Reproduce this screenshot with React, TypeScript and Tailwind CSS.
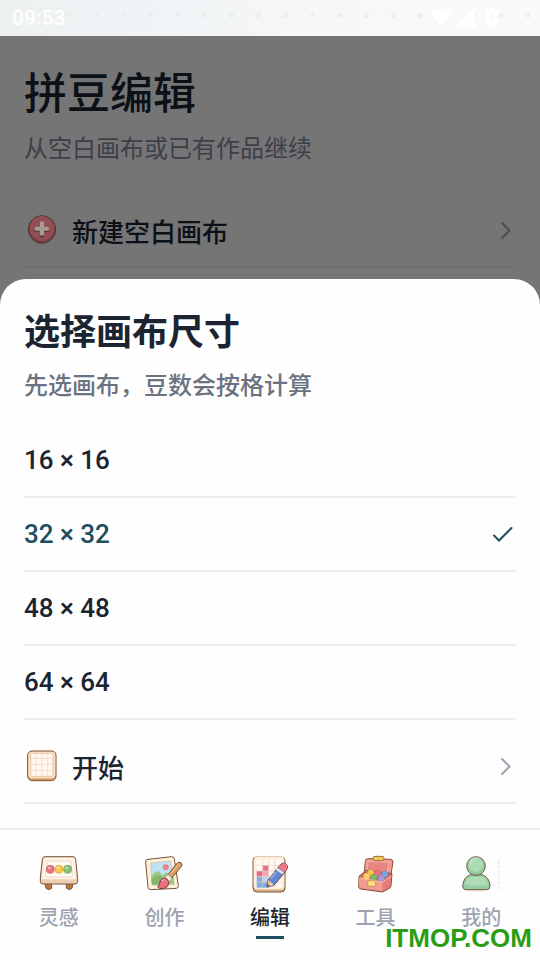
import React, { useState } from 'react';

const sizes = [16, 32, 48, 64];

const StatusIcons = () => (
  <svg className="w-[70px] h-5" viewBox="0 0 70 20" fill="#ffffff" aria-hidden="true">
    <path d="M0 4Q11-3 23 4L11.500 19Z" />
    <path d="M45 0V19H26Z" />
    <path fillRule="evenodd" d="M59 0h5v2h4v17H56V2h3zM63 5l-4 6h3v5l4-7h-3z" />
  </svg>
);

const Chevron = ({ className }: { className: string }) => (
  <svg className={className} viewBox="0 0 20 20" fill="none" stroke="currentColor" strokeWidth="2" strokeLinecap="round" aria-hidden="true">
    <path d="M6 3L13.500 10.500L6 18" />
  </svg>
);

const PlusIcon = () => (
  <svg className="w-9 h-9" viewBox="0 0 108 108" aria-hidden="true">
    <ellipse cx="54" cy="60" rx="36" ry="38" fill="#6e675e" />
    <circle cx="54" cy="52" r="41" fill="#7c3d42" stroke="#49342a" strokeWidth="3" />
    <circle cx="54" cy="49" r="37" fill="#914e53" />
    <path d="M46 33q8-5 14 0v14h14q5 7 0 13H60v14q-7 6-14 0V60H33q-6-6 0-13h13z" fill="#5f342f" />
    <path d="M47 30q7-4 13 0v14h13q5 6 0 12H60v13q-7 5-13 0V56H34q-5-6 0-12h13z" fill="#a69d92" />
  </svg>
);

const CanvasIcon = () => (
  <svg className="w-9 h-9" viewBox="0 0 108 108" aria-hidden="true">
    <rect x="12" y="14" width="84" height="88" rx="14" fill="#f2dfcd" />
    <rect x="11" y="9" width="85" height="88" rx="13" fill="#dba878" stroke="#765138" strokeWidth="3" />
    <rect x="13" y="11" width="81" height="80" rx="12" fill="#ffe3c1" />
    <rect x="20" y="16" width="67" height="69" rx="6" fill="#fff9f2" stroke="#d9ae88" strokeWidth="2" />
    <path d="M36 17v67M54 17v67M71 17v67M21 31h65M21 49h65M21 67h65" stroke="#f8ddc8" strokeWidth="3" />
  </svg>
);

const BenchIcon = () => (
  <>
    <path d="M17 84h21v19q-8 8-17 0zM80 84h23l-4 19q-9 8-16 0z" fill="#b7773d" stroke="#85583a" strokeWidth="3" />
    <path d="M18 8h84q7 0 8 8l6 57v10q0 7-8 7H12q-8 0-8-7V72l6-56q1-8 8-8z" fill="#edceb0" stroke="#775743" strokeWidth="3" />
    <path d="M20 11h81q6 0 7 7l4 50q0 8-7 8H14q-7 0-6-8l5-50q1-7 7-7z" fill="#fff4e7" />
    <path d="M25 21h70l5 44q0 4-4 4H23q-4 0-4-4z" fill="#fffaf2" stroke="#edd8c5" strokeWidth="3" />
    <circle cx="34" cy="46" r="12" fill="#ee7285" stroke="#c65567" strokeWidth="2" />
    <circle cx="60" cy="46" r="12" fill="#f8cc48" stroke="#d79b28" strokeWidth="2" />
    <circle cx="86" cy="46" r="12" fill="#8bc174" stroke="#659c59" strokeWidth="2" />
    <g fill="#ffffff" opacity=".5">
      <circle cx="31" cy="42" r="4" />
      <circle cx="57" cy="42" r="4" />
      <circle cx="83" cy="42" r="4" />
    </g>
  </>
);

const PaintingIcon = () => (
  <>
    <path d="M12 16l71-8q7 0 8 7l12 80q1 7-6 8l-77 4q-7 0-8-7L5 24q-1-7 7-8z" fill="#fff0dc" stroke="#77533d" strokeWidth="3" />
    <path d="M20 27l60-6 11 70-66 2z" fill="#bde3f7" stroke="#d8b493" strokeWidth="2" />
    <path d="M21 69q17-28 29-11l5 7q10-15 18-7l16 13 2 19-67 2z" fill="#9dca83" />
    <path d="M22 76q23-25 35-3l12 18-45 1z" fill="#82b66a" />
    <circle cx="65" cy="40" r="9" fill="#f17e88" />
    <path d="M72 62L98 29q8-8 14-2 5 6-2 13L82 73z" fill="#dca263" stroke="#70482f" strokeWidth="3" />
    <path d="M103 31L81 58" stroke="#f5c78c" strokeWidth="3" />
    <path d="M72 61l12 12-9 12-14-13z" fill="#f5eee6" stroke="#8a7464" strokeWidth="2" />
    <path d="M60 72q11 0 14 11 1 20-20 21-10 1-14-7 6 0 6-8 2-14 14-17z" fill="#e8707f" stroke="#7f3f43" strokeWidth="3" />
    <path d="M53 82q4-6 9-4" stroke="#ffb1b8" strokeWidth="4" fill="none" />
  </>
);

const BoardIcon = () => (
  <>
    <rect x="9" y="8" width="96" height="106" rx="12" fill="#d9b38d" stroke="#76523b" strokeWidth="3" />
    <rect x="11" y="7" width="92" height="99" rx="11" fill="#ffedda" />
    <rect x="19" y="17" width="74" height="84" rx="4" fill="#fffaf4" />
    <path d="M38 34h18v17H38z" fill="#ec6e8b" />
    <path d="M20 51h18v17H20z" fill="#e76886" />
    <path d="M38 51h18v17H38z" fill="#f7a4b4" />
    <path d="M20 68h18v33H20zM38 84h18v17H38z" fill="#82ace3" />
    <path d="M38 68h18v16H38z" fill="#b8d3f6" />
    <path d="M38 17v84M56 17v84M74 17v84M19 34h74M19 51h74M19 68h74M19 84h74" stroke="#e8d0bb" strokeWidth="2" />
    <path d="M54 79L88 35q12-13 21-4 9 7 0 18L72 94l-18 5q-4 0-3-5z" fill="#6587d0" stroke="#5b4951" strokeWidth="3" />
    <path d="M87 36q13-14 22-5 8 8-1 18l-5 5-20-15z" fill="#ed7584" />
    <path d="M82 41l20 14-5 6-20-14z" fill="#e2e0e5" />
    <path d="M55 78l17 15-17 5q-4 0-3-5z" fill="#f2c896" />
    <path d="M52 89l8 7-9 2z" fill="#44566e" />
    <path d="M77 54L62 74" stroke="#91afe9" strokeWidth="5" />
  </>
);

const ToolboxIcon = () => (
  <>
    <path d="M35 14l68 2q8 0 8 8l-7 44-80-6 4-40q1-8 7-8z" fill="#f39a91" stroke="#86503f" strokeWidth="3" />
    <path d="M37 22l61 3-5 38-62-3z" fill="#e98580" stroke="#f8b0a4" strokeWidth="3" />
    <rect x="51" y="7" width="33" height="13" rx="6" fill="#f5c65d" stroke="#997032" strokeWidth="3" />
    <path d="M9 67l22-18 77 10-3 36q0 5-5 8l-20 11-65-9q-7-1-7-7z" fill="#d97069" stroke="#86503f" strokeWidth="3" />
    <path d="M15 66l20-14 66 10-20 17z" fill="#b9635d" />
    <g strokeWidth="1">
      <circle cx="44" cy="57" r="10" fill="#f6c950" stroke="#c99533" />
      <circle cx="65" cy="58" r="10" fill="#ef7185" stroke="#b84d5d" />
      <circle cx="86" cy="61" r="10" fill="#78a8e2" stroke="#4f78af" />
      <circle cx="32" cy="67" r="10" fill="#f9cf5f" stroke="#c69438" />
      <circle cx="54" cy="70" r="10" fill="#81b96a" stroke="#55844a" />
      <circle cx="76" cy="72" r="10" fill="#b193db" stroke="#8167a9" />
    </g>
    <path d="M9 72l71 13v27l-65-9q-6-1-6-7z" fill="#f39a91" />
    <path d="M80 85l26-19-3 29-23 17z" fill="#e57e78" />
    <path d="M11 72l69 12 26-18" fill="none" stroke="#ffc0b2" strokeWidth="3" />
    <rect x="35" y="80" width="24" height="17" rx="4" fill="#ffdc82" stroke="#b98645" strokeWidth="2" />
  </>
);

const PersonIcon = () => (
  <>
    <ellipse cx="46" cy="106" rx="38" ry="6" fill="#f2e4d3" />
    <path d="M28 62h35q23 8 24 34 0 11-10 11H15q-10 0-10-11 2-26 23-34z" fill="#98cca4" stroke="#765b46" strokeWidth="3" />
    <path d="M12 91q2-15 16-23h35q14 7 18 23-18 8-69 0z" fill="#acdbb5" />
    <circle cx="45" cy="36" r="28" fill="#93c9a0" stroke="#765b46" strokeWidth="3" />
    <circle cx="44" cy="32" r="22" fill="#acdbb5" />
    <path d="M28 28q4-11 14-12" stroke="#c6e8cb" strokeWidth="4" strokeLinecap="round" fill="none" />
    <path d="M113 19v88" stroke="#f3ebe1" strokeWidth="5" strokeDasharray="10 6" />
  </>
);

const tabs = [
  { name: '灵感', icon: <BenchIcon /> },
  { name: '创作', icon: <PaintingIcon /> },
  { name: '编辑', icon: <BoardIcon /> },
  { name: '工具', icon: <ToolboxIcon /> },
  { name: '我的', icon: <PersonIcon /> },
];

const App = () => {
  const [size, setSize] = useState(32);

  return (
    <div className="relative min-h-screen flex flex-col bg-[#757575] font-[Roboto,'Noto_Sans_CJK_SC',sans-serif]" lang="zh-CN">
      <div className="h-9 shrink-0 flex items-center justify-between pl-3 pr-10 bg-linear-to-r from-[#edf1f2] via-[#f4f6f8] to-[#f9fbfb] text-white">
        <svg className="absolute top-0 left-0 w-full h-9" aria-hidden="true">
          <defs>
            <pattern id="pegs" x="1" y="0" width="27" height="36" patternUnits="userSpaceOnUse">
              <circle cx="14" cy="15" r="2.500" fill="#e9ecec" />
              <circle cx="13" cy="14" r="1" fill="#f8f9f9" />
            </pattern>
          </defs>
          <rect width="100%" height="36" fill="url(#pegs)" />
        </svg>
        <time className="relative text-[21px] leading-9 font-medium">09:53</time>
        <div className="relative">
          <StatusIcons />
        </div>
      </div>

      <header className="px-6 pt-[26px]">
        <h1 className="text-[43px] leading-[64px] font-medium text-[#0c1117]">拼豆编辑</h1>
        <p className="text-2xl leading-[46px] text-[#3c3f48]">从空白画布或已有作品继续</p>
        <button className="mt-[22px] w-full h-[74px] flex items-center gap-3 border-b-2 border-[#6e6e6e] text-[26px] font-medium text-[#0c1117]">
          <PlusIcon />
          <span className="pt-1.5">新建空白画布</span>
          <Chevron className="ml-auto w-5 h-5 text-[#494e56]" />
        </button>
      </header>

      <section className="mt-[11px] flex-1 rounded-t-[26px] bg-[#fefefe] px-6 pt-[27px] pb-6 text-[#1b2430]">
        <h2 className="text-4xl leading-[54px] font-bold">选择画布尺寸</h2>
        <p className="text-2xl leading-[52px] font-medium text-[#6b7280]">先选画布，豆数会按格计算</p>
        <div className="mt-3" role="radiogroup" aria-label="选择画布尺寸">
          {sizes.map((n) => (
            <label
              key={n}
              className="h-[74px] flex items-center justify-between border-b-2 border-[#eeeeee] text-[26px] font-medium has-checked:text-[#1f4e5f]"
            >
              <input type="radio" name="size" className="sr-only" checked={size === n} onChange={() => setSize(n)} />
              <span>{n} × {n}</span>
              {size === n && (
                <svg className="w-6 h-6" viewBox="0 0 24 24" fill="none" stroke="currentColor" strokeWidth="2" strokeLinecap="round" aria-hidden="true">
                  <path d="M2 13.500L7 18.500L19.500 6" />
                </svg>
              )}
            </label>
          ))}
        </div>
        <button className="mt-2.5 w-full h-[74px] flex items-center gap-3 border-b-2 border-[#eeeeee] text-[26px] font-medium">
          <CanvasIcon />
          <span className="pt-1.5">开始</span>
          <Chevron className="ml-auto w-5 h-5 text-[#9ca3af]" />
        </button>
      </section>

      <nav className="h-[132px] shrink-0 flex px-1.5 pt-6 bg-[#fefefe] border-t-2 border-[#eeeeee]">
        {tabs.map((tab) => {
          const active = tab.name === '编辑';
          return (
            <a key={tab.name} href="#" className="flex-1 flex flex-col items-center" aria-current={active ? 'page' : undefined}>
              <svg className="w-10 h-10" viewBox="0 0 120 120" aria-hidden="true">{tab.icon}</svg>
              <span className={active ? 'mt-2.5 text-xl leading-7 font-medium text-[#1b2430]' : 'mt-2.5 text-xl leading-7 font-medium text-[#9ca3af]'}>
                {tab.name}
              </span>
              {active && <span className="mt-1 w-7 h-[3px] bg-[#1f4e5f]" />}
            </a>
          );
        })}
      </nav>

      <div className="absolute right-2 bottom-1.5 font-['Liberation_Sans',sans-serif] text-[26px] leading-8 font-bold text-[#2a9c16]">ITMOP.COM</div>
    </div>
  );
};

export default App;
